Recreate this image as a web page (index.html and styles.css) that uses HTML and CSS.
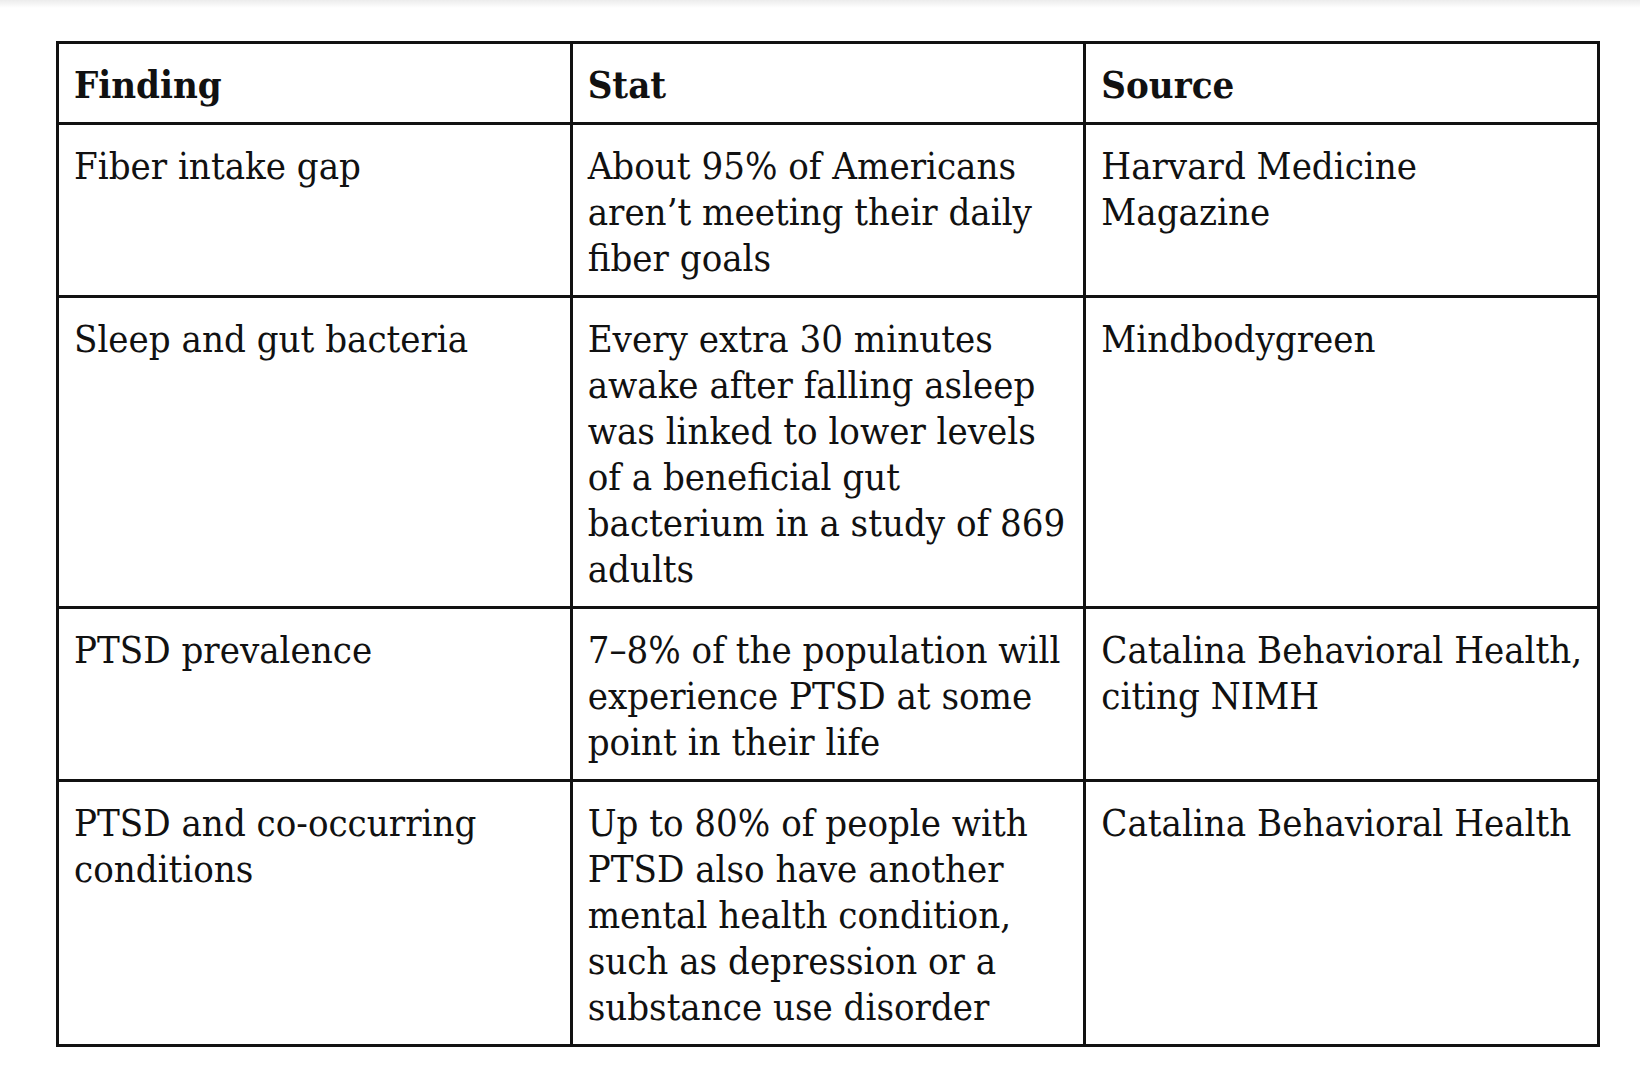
FILE: index.html
```html
<!DOCTYPE html>
<html lang="en">
<head>
    <meta charset="UTF-8">
    <meta name="viewport" content="width=device-width, initial-scale=1.0">
    <title>Research findings</title>
    <link rel="stylesheet" href="styles.css">
</head>
<body>
    <div class="top-shade"></div>
    <div class="page">
        <table class="findings">
            <thead>
                <tr>
                    <th>Finding</th>
                    <th>Stat</th>
                    <th>Source</th>
                </tr>
            </thead>
            <tbody>
                <tr>
                    <td>Fiber intake gap</td>
                    <td>About 95% of Americans aren’t meeting their daily fiber goals</td>
                    <td>Harvard Medicine Magazine</td>
                </tr>
                <tr>
                    <td>Sleep and gut bacteria</td>
                    <td>Every extra 30 minutes awake after falling asleep was linked to lower levels of a beneficial gut bacterium in a study of 869 adults</td>
                    <td>Mindbodygreen</td>
                </tr>
                <tr>
                    <td>PTSD prevalence</td>
                    <td>7–8% of the population will experience PTSD at some point in their life</td>
                    <td>Catalina Behavioral Health, citing NIMH</td>
                </tr>
                <tr>
                    <td>PTSD and co-occurring conditions</td>
                    <td>Up to 80% of people with PTSD also have another mental health condition, such as depression or a substance use disorder</td>
                    <td>Catalina Behavioral Health</td>
                </tr>
            </tbody>
        </table>
    </div>
</body>
</html>
```

FILE: styles.css
```css
body {
    margin: 0;
    padding: 0;
    background-color: #ffffff;
    font-family: "DejaVu Serif Condensed", "DejaVu Serif", "Liberation Serif", serif;
    font-stretch: condensed;
    color: #111111;
}
.top-shade {
    height: 8px;
    background: linear-gradient(to bottom, #ececec, #ffffff);
}
.page {
    padding: 33px 40px 30px 56px;
}
.findings {
    width: 1544px;
    border-collapse: collapse;
    table-layout: fixed;
}
.findings th,
.findings td {
    width: 33.33%;
    border: 3px solid #111111;
    padding: 18px 11px 14px 15px;
    text-align: left;
    vertical-align: top;
    font-size: 38px;
    line-height: 46px;
}
.findings th {
    font-weight: 700;
}
.findings td {
    font-weight: 400;
}
```
